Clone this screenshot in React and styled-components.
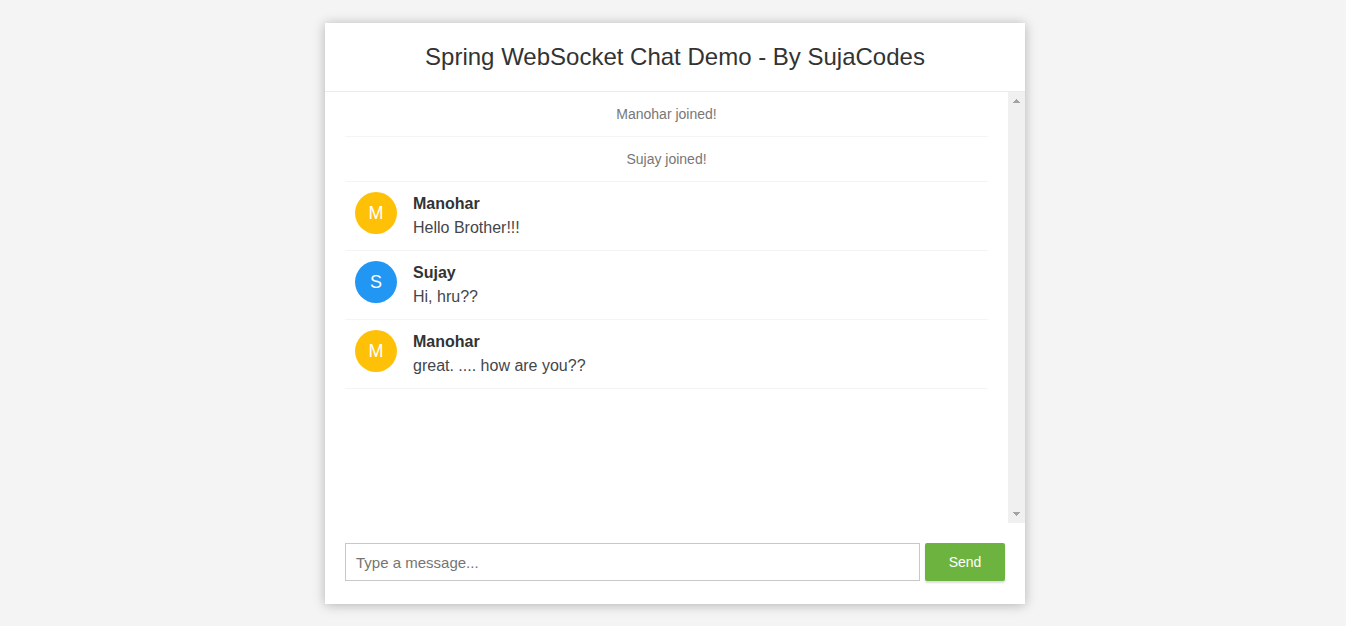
import React from 'react';
import styled, { createGlobalStyle } from 'styled-components';

const GlobalStyle = createGlobalStyle`
  *, *::before, *::after {
    box-sizing: border-box;
  }

  body {
    margin: 0;
    background: #f4f4f4;
    color: #333;
    font-family: "Liberation Sans", Arial, Helvetica, sans-serif;
    font-size: 16px;
  }
`;

const Page = styled.main`
  display: flex;
  justify-content: center;
  min-height: 100vh;
  padding: 23px 16px 22px 20px;
`;

const ChatCard = styled.section`
  display: flex;
  flex-direction: column;
  width: 100%;
  max-width: 700px;
  background: #fff;
  box-shadow: 0 1px 11px rgba(0, 0, 0, 0.27);
`;

const ChatHeader = styled.header`
  padding: 20px;
  border-bottom: 1px solid #ececec;
  text-align: center;
`;

const Title = styled.h1`
  margin: 0;
  font-size: 24px;
  font-weight: 500;
  line-height: 28px;
`;

const MessageArea = styled.div`
  display: flex;
  flex: 1;
`;

const MessageList = styled.ul`
  flex: 1;
  min-width: 0;
  margin: 0;
  padding: 0 20px;
  list-style: none;
`;

const EventRow = styled.li`
  padding: 10px 20px;
  border-bottom: 1px solid #f4f4f4;
  color: #777;
  font-size: 14px;
  line-height: 24px;
  text-align: center;
`;

const MessageRow = styled.li`
  display: flex;
  gap: 16px;
  padding: 10px;
  border-bottom: 1px solid #f4f4f4;
  line-height: 24px;
`;

const Avatar = styled.span`
  flex: none;
  width: 42px;
  height: 42px;
  border-radius: 50%;
  background: ${({ $color }) => $color};
  color: #fff;
  font-size: 18px;
  line-height: 42px;
  text-align: center;
`;

const Author = styled.strong`
  display: block;
  color: #333;
  font-weight: 600;
`;

const MessageText = styled.p`
  margin: 0;
  color: #43464b;
`;

const ScrollTrack = styled.div`
  display: flex;
  flex: none;
  flex-direction: column;
  align-items: center;
  justify-content: space-between;
  width: 17px;
  background: #f0f0f0;
`;

const ScrollArrow = styled.svg`
  display: block;
  width: 17px;
  height: 17px;
  fill: #a3a3a3;
`;

const MessageForm = styled.form`
  display: flex;
  gap: 5px;
  padding: 20px 20px 23px;
`;

const MessageInput = styled.input`
  flex: 1;
  min-width: 0;
  height: 38px;
  padding: 0 10px;
  border: 1px solid #c8c8c8;
  border-radius: 0;
  background: #fff;
  color: #333;
  font-family: inherit;
  font-size: 15px;

  &::placeholder {
    color: #757575;
  }
`;

const SendButton = styled.button`
  width: 80px;
  height: 38px;
  padding: 0;
  border: 0;
  border-radius: 2px;
  background: #6db33f;
  box-shadow: 0 2px 2px rgba(0, 0, 0, 0.14);
  color: #fff;
  font-family: inherit;
  font-size: 14px;
  cursor: pointer;
`;

const avatarColors = { Manohar: '#ffc107', Sujay: '#2196f3' };

const entries = [
  { event: 'Manohar joined!' },
  { event: 'Sujay joined!' },
  { author: 'Manohar', text: 'Hello Brother!!!' },
  { author: 'Sujay', text: 'Hi, hru??' },
  { author: 'Manohar', text: 'great. .... how are you??' },
];

export default function App() {
  return (
    <>
      <GlobalStyle />
      <Page>
        <ChatCard>
          <ChatHeader>
            <Title>Spring WebSocket Chat Demo - By SujaCodes</Title>
          </ChatHeader>
          <MessageArea>
            <MessageList>
              {entries.map((entry, index) =>
                entry.event ? (
                  <EventRow key={index}>{entry.event}</EventRow>
                ) : (
                  <MessageRow key={index}>
                    <Avatar $color={avatarColors[entry.author]}>{entry.author[0]}</Avatar>
                    <div>
                      <Author>{entry.author}</Author>
                      <MessageText>{entry.text}</MessageText>
                    </div>
                  </MessageRow>
                )
              )}
            </MessageList>
            <ScrollTrack aria-hidden="true">
              <ScrollArrow viewBox="0 0 17 17" shapeRendering="crispEdges">
                <path d="M8 7h1v1h1v1h1v1h1v1H5v-1h1V9h1V8h1z" />
              </ScrollArrow>
              <ScrollArrow viewBox="0 0 17 17" shapeRendering="crispEdges">
                <path d="M5 6h7v1h-1v1h-1v1H9v1H8V9H7V8H6V7H5z" />
              </ScrollArrow>
            </ScrollTrack>
          </MessageArea>
          <MessageForm onSubmit={(event) => event.preventDefault()}>
            <MessageInput
              type="text"
              aria-label="Message"
              placeholder="Type a message..."
              autoComplete="off"
            />
            <SendButton type="submit">Send</SendButton>
          </MessageForm>
        </ChatCard>
      </Page>
    </>
  );
}
